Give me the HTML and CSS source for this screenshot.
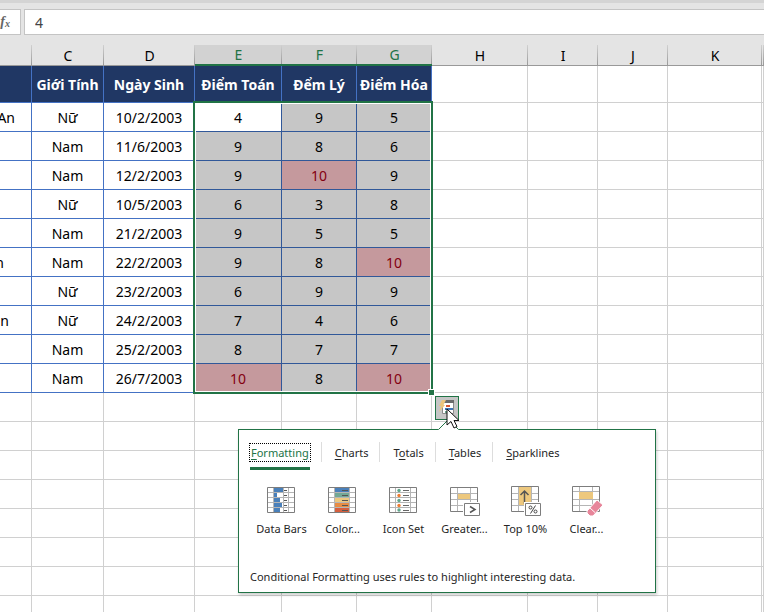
FILE: index.html
```html
<!DOCTYPE html>
<html lang="vi">
<head>
<meta charset="utf-8">
<title>Spreadsheet</title>
<link rel="stylesheet" href="styles.css">
</head>
<body>
<header class="formula-bar">
  <button class="fx" type="button" aria-label="Insert function"><i>f</i><sub>x</sub></button>
  <input class="formula" type="text" value="4" aria-label="Formula">
</header>
<main class="sheet">
<table class="grid">
  <colgroup><col class="w-b"><col class="w-c"><col class="w-d"><col class="w-e"><col class="w-f"><col class="w-f"><col class="w-h"><col class="w-i"><col class="w-i"><col class="w-k"><col></colgroup>
  <thead>
    <tr class="letters"><th></th><th>C</th><th>D</th><th class="on">E</th><th class="on">F</th><th class="on">G</th><th>H</th><th>I</th><th>J</th><th>K</th><th></th></tr>
  </thead>
  <tbody>
    <tr class="titles"><th></th><th>Giới Tính</th><th>Ngày Sinh</th><th>Điểm Toán</th><th>Đểm Lý</th><th>Điểm Hóa</th><td></td><td></td><td></td><td></td><td></td></tr>
    <tr class="data"><td class="name">An</td><td>Nữ</td><td>10/2/2003</td><td class="active">4</td><td>9</td><td>5</td><td></td><td></td><td></td><td></td><td></td></tr>
    <tr class="data"><td></td><td>Nam</td><td>11/6/2003</td><td>9</td><td>8</td><td>6</td><td></td><td></td><td></td><td></td><td></td></tr>
    <tr class="data"><td></td><td>Nam</td><td>12/2/2003</td><td>9</td><td class="top">10</td><td>9</td><td></td><td></td><td></td><td></td><td></td></tr>
    <tr class="data"><td></td><td>Nữ</td><td>10/5/2003</td><td>6</td><td>3</td><td>8</td><td></td><td></td><td></td><td></td><td></td></tr>
    <tr class="data"><td></td><td>Nam</td><td>21/2/2003</td><td>9</td><td>5</td><td>5</td><td></td><td></td><td></td><td></td><td></td></tr>
    <tr class="data"><td class="name far">n</td><td>Nam</td><td>22/2/2003</td><td>9</td><td>8</td><td class="top">10</td><td></td><td></td><td></td><td></td><td></td></tr>
    <tr class="data"><td></td><td>Nữ</td><td>23/2/2003</td><td>6</td><td>9</td><td>9</td><td></td><td></td><td></td><td></td><td></td></tr>
    <tr class="data"><td class="name near">n</td><td>Nữ</td><td>24/2/2003</td><td>7</td><td>4</td><td>6</td><td></td><td></td><td></td><td></td><td></td></tr>
    <tr class="data"><td></td><td>Nam</td><td>25/2/2003</td><td>8</td><td>7</td><td>7</td><td></td><td></td><td></td><td></td><td></td></tr>
    <tr class="data"><td></td><td>Nam</td><td>26/7/2003</td><td class="top">10</td><td>8</td><td class="top">10</td><td></td><td></td><td></td><td></td><td></td></tr>
    <tr><td></td><td></td><td></td><td></td><td></td><td></td><td></td><td></td><td></td><td></td><td></td></tr>
    <tr><td></td><td></td><td></td><td></td><td></td><td></td><td></td><td></td><td></td><td></td><td></td></tr>
    <tr><td></td><td></td><td></td><td></td><td></td><td></td><td></td><td></td><td></td><td></td><td></td></tr>
    <tr><td></td><td></td><td></td><td></td><td></td><td></td><td></td><td></td><td></td><td></td><td></td></tr>
    <tr><td></td><td></td><td></td><td></td><td></td><td></td><td></td><td></td><td></td><td></td><td></td></tr>
    <tr><td></td><td></td><td></td><td></td><td></td><td></td><td></td><td></td><td></td><td></td><td></td></tr>
    <tr><td></td><td></td><td></td><td></td><td></td><td></td><td></td><td></td><td></td><td></td><td></td></tr>
    <tr><td></td><td></td><td></td><td></td><td></td><td></td><td></td><td></td><td></td><td></td><td></td></tr>
  </tbody>
</table>
<div class="selection"><span class="handle"></span></div>
<button class="quick" type="button" aria-label="Quick analysis">
  <svg width="22" height="22" viewBox="0 0 22 22">
    <path d="M6.500 4.500h11v12h-11z" fill="#fff" stroke="#8a8a8a"/><path d="M8 3h10v3H8z" fill="#6a6a6a"/>
    <path d="M10 8h4v2h-4z" fill="#d65532"/><path d="M9 11h8v2H9z" fill="#3f76b5"/><path d="M9 14h3v2H9z" fill="#6da58d"/>
    <path d="M6 3h4L7.500 8H9l-6 7 2-6H3z" fill="#ecc47c"/>
  </svg>
</button>
<section class="panel">
  <svg class="caret" width="21" height="11" viewBox="0 0 21 11"><path d="M0 11L10.500 .5 21 11z" fill="#fff"/><path d="M.5 10.500l10-10 10 10" fill="none" stroke="#217346"/></svg>
  <nav class="tabs">
    <button class="tab current" type="button"><span><u>F</u>ormatting</span></button>
    <i class="sep"></i>
    <button class="tab" type="button"><span><u>C</u>harts</span></button>
    <i class="sep"></i>
    <button class="tab" type="button"><span>T<u>o</u>tals</span></button>
    <i class="sep"></i>
    <button class="tab" type="button"><span><u>T</u>ables</span></button>
    <i class="sep"></i>
    <button class="tab" type="button"><span><u>S</u>parklines</span></button>
  </nav>
  <div class="tools">
    <button class="tool" type="button">
      <svg width="36" height="32" viewBox="0 0 36 32"><path d="M4.500 2.500h27v25h-27z" fill="#fff"/><path d="M5 7.500h26M5 12.500h26M5 17.500h26M5 22.500h26M10.500 3v24M20.500 3v24M25.500 3v24" stroke="#b5b5b5"/><path d="M11 3h9v4h-9zM11 8h3v4h-3zM11 13h6v4h-6zM11 18h8v4h-8zM11 23h6v4h-6z" fill="#4a80ba"/><path d="M21 5.500h3M21 10.500h3M21 15.500h3M21 20.500h3M21 25.500h3" stroke="#555"/><path d="M4.500 2.500h27v25h-27z" fill="none" stroke="#7d7d7d"/></svg>
      Data Bars</button>
    <button class="tool" type="button">
      <svg width="36" height="32" viewBox="0 0 36 32"><path d="M4.500 2.500h27v25h-27z" fill="#fff"/><path d="M5 7.500h26M5 12.500h26M5 17.500h26M5 22.500h26M10.500 3v24M25.500 3v24" stroke="#b5b5b5"/><path d="M11 3h14v4H11z" fill="#4a80ba"/><path d="M11 8h14v4H11z" fill="#73a895"/><path d="M11 13h14v4H11z" fill="#edc87e"/><path d="M11 18h14v4H11z" fill="#e78c43"/><path d="M11 23h14v4H11z" fill="#d65f3e"/><path d="M18 5.500h6M18 10.500h6M18 15.500h6M18 20.500h6M18 25.500h6" stroke="#555"/><path d="M4.500 2.500h27v25h-27z" fill="none" stroke="#7d7d7d"/></svg>
      Color...</button>
    <button class="tool" type="button">
      <svg width="36" height="32" viewBox="0 0 36 32"><path d="M4.500 2.500h27v25h-27z" fill="#fff"/><path d="M5 7.500h26M5 12.500h26M5 17.500h26M5 22.500h26M10.500 3v24M25.500 3v24" stroke="#b5b5b5"/><path d="M18 5.500h6M18 10.500h6M18 15.500h6M18 20.500h6M18 25.500h6" stroke="#666"/><g fill="#62a68c"><circle cx="14" cy="5.500" r="1.700"/><circle cx="14" cy="15.500" r="1.700"/><circle cx="14" cy="25" r="1.700"/></g><g fill="#ef7d31"><circle cx="14" cy="10.500" r="1.700"/><circle cx="14" cy="20.500" r="1.700"/></g><path d="M4.500 2.500h27v25h-27z" fill="none" stroke="#7d7d7d"/></svg>
      Icon Set</button>
    <button class="tool" type="button">
      <svg width="36" height="32" viewBox="0 0 36 32"><path d="M4.500 2.500h27v24h-27z" fill="#fff"/><path d="M5 8.500h26M5 14.500h26M5 20.500h26M11.500 3v23M24.500 3v23" stroke="#b5b5b5"/><path d="M12 9h12v5H12z" fill="#edc87e"/><path d="M4.500 2.500h27v24h-27z" fill="none" stroke="#7d7d7d"/><path d="M17 17h19v15H17z" fill="#fff"/><path d="M18.500 18.500h15v12h-15z" fill="#fff" stroke="#7d7d7d"/><path d="M24 21.500l5 3-5 3" fill="none" stroke="#555" stroke-width="1.500"/></svg>
      Greater...</button>
    <button class="tool" type="button">
      <svg width="36" height="32" viewBox="0 0 36 32"><path d="M4.500 1.500h27v25h-27z" fill="#fff"/><path d="M5 8.500h26M5 14.500h26M5 20.500h26M11.500 2v24M24.500 2v24" stroke="#b5b5b5"/><path d="M12 2h12v18H12z" fill="#edc87e"/><path d="M4.500 1.500h27v25h-27z" fill="none" stroke="#7d7d7d"/><path d="M17.500 19V6M13.500 10l4-4 4 4" fill="none" stroke="#555" stroke-width="1.500"/><path d="M17 17h19v15H17z" fill="#fff"/><path d="M18.500 18.500h15v12h-15z" fill="#fff" stroke="#7d7d7d"/><g fill="none" stroke="#444"><path d="M28.500 20.500l-5 8"/><circle cx="23.500" cy="22.500" r="1.500"/><circle cx="28.500" cy="26.500" r="1.500"/></g></svg>
      Top 10%</button>
    <button class="tool" type="button">
      <svg width="36" height="32" viewBox="0 0 36 32"><path d="M4.500 1.500h27v25h-27z" fill="#fff"/><path d="M5 6.500h26M5 14.500h26M5 20.500h26M11.500 2v24M24.500 2v24" stroke="#b5b5b5"/><path d="M11 7h14v7H11z" fill="#edc87e"/><path d="M4.500 1.500h27v25h-27z" fill="none" stroke="#7d7d7d"/><path d="M19 26l10-11 6 5-10 11h-3l-3-3z" fill="#e7859a" stroke="#fff"/><path d="M22 23l5 4.500" stroke="#fff"/></svg>
      Clear...</button>
  </div>
  <p class="hint">Conditional Formatting uses rules to highlight interesting data.</p>
</section>
<svg class="pointer" width="14" height="22" viewBox="0 0 14 22"><path d="M1 1v16l4-3.500 3 6.500 3-1.500-3-6h5z" fill="#fff" stroke="#111"/></svg>
</main>
</body>
</html>
```
FILE: styles.css
```css
* { box-sizing: border-box; }
body {
  margin: 0;
  height: 100vh;
  overflow: hidden;
  background: #e4e4e4;
  color: #000;
  font-family: "Noto Sans", sans-serif;
  font-size: 14px;
}
button { margin: 0; padding: 0; border: 0; background: none; font: inherit; color: inherit; }

.formula-bar {
  display: flex;
  gap: 3px;
  padding: 6px 0 10px;
  border-top: 3px solid #d4d4d4;
}
.fx, .formula { height: 26px; border: 1px solid #c4c4c4; background: #fff; }
.fx {
  width: 21px;
  border-left: 0;
  padding-right: 10px;
  display: flex;
  justify-content: flex-end;
  align-items: center;
  font: bold 14px/20px "Liberation Serif", serif;
  color: #666;
}
.fx sub { font-size: 10px; font-style: italic; padding-top: 4px; }
.formula {
  flex: 1;
  min-width: 0;
  border-right: 0;
  padding: 0 10px;
  font: 14px "Noto Sans", sans-serif;
  color: #444;
}

.sheet { position: relative; }
.grid { width: 100%; table-layout: fixed; border-spacing: 0; background: #fff; }
.w-b { width: 32px; }
.w-c { width: 72px; }
.w-d { width: 91px; }
.w-e { width: 87px; }
.w-f { width: 75px; }
.w-h { width: 96px; }
.w-i { width: 70px; }
.w-k { width: 94px; }
.grid th, .grid td {
  height: 29px;
  padding: 2px 0 0;
  border: solid #d0d0d0;
  border-width: 0 1px 1px 0;
  text-align: center;
  line-height: 20px;
  white-space: nowrap;
}
.grid .letters th {
  height: 21px;
  padding: 0;
  background: linear-gradient(#d0d0d0, #999) right / 1px 100% no-repeat #e4e4e4;
  border-right: 0;
  border-bottom-color: #999;
  font-weight: 400;
  line-height: 19px;
}
.grid .letters .on {
  background-color: #d2d2d2;
  border-bottom: 2px solid #217346;
  color: #217346;
}
.grid .titles th, .grid .titles td { height: 37px; }
.grid .titles th { background: #203764; color: #fff; border-color: #4472c4; }
.data td:nth-child(-n+6) { border-color: #4472c4; }
.data td:nth-child(n+4):nth-child(-n+6) { background: #c6c6c6; border-color: #315899; }
.data td.active:nth-child(4) { background: #fff; }
.data td.top:nth-child(n) { background: #c5999d; color: #840010; }
.grid .name { direction: rtl; text-align: right; text-align: start; padding-right: 17px; }
.grid .far { padding-right: 28px; }
.grid .near { padding-right: 23px; }

.selection {
  position: absolute;
  left: 193px;
  top: 56px;
  width: 240px;
  height: 293px;
  border: 2px solid #217346;
  box-shadow: inset 0 0 0 1px #fff;
}
.handle {
  position: absolute;
  right: -4px;
  bottom: -4px;
  width: 7px;
  height: 7px;
  background: #217346;
  border: 1px solid #fff;
}
.quick {
  position: absolute;
  left: 435px;
  top: 351px;
  width: 24px;
  height: 24px;
  border: 1px solid #217346;
  background: #c6c6c6;
}
.quick svg { display: block; }
.pointer { position: absolute; left: 446px; top: 363px; }

.panel {
  position: absolute;
  left: 238px;
  top: 384px;
  width: 418px;
  padding: 12px 11px 7px;
  border: 1px solid #217346;
  background: #fff;
  box-shadow: 1px 2px 3px #0003;
  color: #262626;
  font-size: 11px;
  line-height: 16px;
}
.caret { position: absolute; left: 199px; top: -11px; }
.tabs { display: flex; }
.tab {
  display: flex;
  align-items: flex-start;
  height: 28px;
  padding-top: 2px;
  border-bottom: 3px solid transparent;
}
.tab span { padding-top: 1px; }
.tab u { text-underline-offset: 2px; }
.sep { width: 1px; height: 20px; margin: 0 13px 0 11px; background: #ddd; }
.current { color: #217346; border-color: #217346; }
.current span { padding: 1px 1px 0; outline: 1px dotted #000; }
.tools { display: flex; margin-top: 15px; padding-left: 1px; }
.tool { width: 61px; white-space: nowrap; }
.tool svg { display: block; margin: 0 12px 4px; }
.hint { margin: 32px 0 0; }
```
